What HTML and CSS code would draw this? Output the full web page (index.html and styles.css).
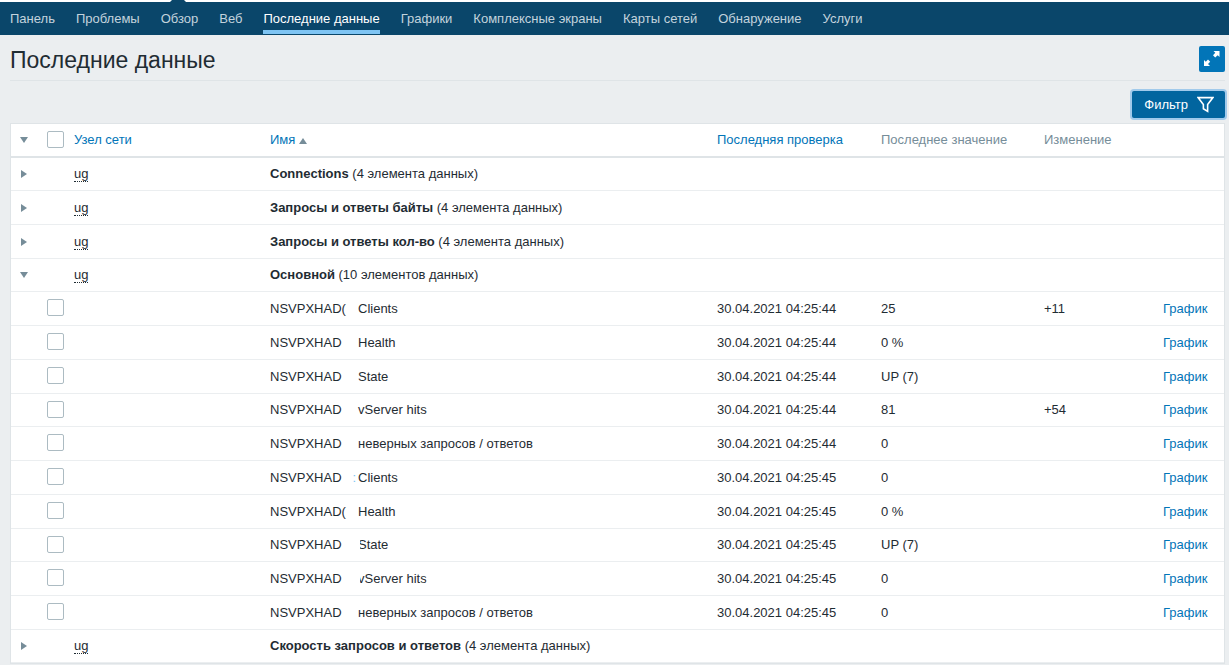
FILE: index.html
```html
<!DOCTYPE html>
<html lang="ru">
<head>
<meta charset="utf-8">
<meta name="viewport" content="width=device-width, initial-scale=1">
<title>Последние данные</title>
<link rel="stylesheet" href="styles.css">
</head>
<body>
<nav class="top-nav">
  <svg class="nav-pointer" viewBox="0 0 16 2" aria-hidden="true"><path d="M0 2L2 0H14L16 2Z"/></svg>
  <a href="#">Панель</a>
  <a href="#">Проблемы</a>
  <a href="#">Обзор</a>
  <a href="#">Веб</a>
  <a href="#" class="active" aria-current="page">Последние данные</a>
  <a href="#">Графики</a>
  <a href="#">Комплексные экраны</a>
  <a href="#">Карты сетей</a>
  <a href="#">Обнаружение</a>
  <a href="#">Услуги</a>
</nav>
<main class="page">
  <header class="page-head">
    <h1>Последние данные</h1>
    <button class="btn-kiosk" type="button" aria-label="Полный экран">
      <svg viewBox="0 0 26 26" aria-hidden="true"><path d="M14.500 5H20.500V11L18.700 9.200L16.200 11.500L14 9.300L16.300 6.800ZM5 14L6.800 15.800L9 13.500L11.200 15.700L9 18L11 20H5Z"/></svg>
    </button>
  </header>
  <div class="filter-bar">
    <button class="btn-filter" type="button">Фильтр
      <svg viewBox="0 0 16 16" aria-hidden="true"><path d="M1 1.500H15L10 8V14.500L6 12V8Z"/></svg>
    </button>
  </div>
  <table class="data">
    <colgroup>
      <col class="c-toggle"><col class="c-check"><col class="c-host"><col class="c-name">
      <col class="c-time"><col class="c-value"><col class="c-change"><col class="c-graph">
    </colgroup>
    <thead>
      <tr>
        <th><button class="toggle open" type="button" aria-label="Свернуть все"></button></th>
        <th><input type="checkbox" aria-label="Выбрать все"></th>
        <th><a href="#">Узел сети</a></th>
        <th><a href="#">Имя <span class="sort"></span></a></th>
        <th><a href="#">Последняя проверка</a></th>
        <th>Последнее значение</th>
        <th>Изменение</th>
        <th></th>
      </tr>
    </thead>
    <tbody>
      <tr><td><button class="toggle" type="button" aria-label="Развернуть"></button></td><td></td><td><a class="host" href="#">ug</a></td><td colspan="5"><b>Connections</b> (4 элемента данных)</td></tr>
      <tr><td><button class="toggle" type="button" aria-label="Развернуть"></button></td><td></td><td><a class="host" href="#">ug</a></td><td colspan="5"><b>Запросы и ответы байты</b> (4 элемента данных)</td></tr>
      <tr><td><button class="toggle" type="button" aria-label="Развернуть"></button></td><td></td><td><a class="host" href="#">ug</a></td><td colspan="5"><b>Запросы и ответы кол-во</b> (4 элемента данных)</td></tr>
      <tr><td><button class="toggle open" type="button" aria-label="Свернуть"></button></td><td></td><td><a class="host" href="#">ug</a></td><td colspan="5"><b>Основной</b> (10 элементов данных)</td></tr>
      <tr><td></td><td><input type="checkbox" aria-label="Clients"></td><td></td><td><span class="item"><span class="server">NSVPXHAD(</span><span>Clients</span></span></td><td>30.04.2021 04:25:44</td><td>25</td><td>+11</td><td><a href="#">График</a></td></tr>
      <tr><td></td><td><input type="checkbox" aria-label="Health"></td><td></td><td><span class="item"><span class="server">NSVPXHAD</span><span>Health</span></span></td><td>30.04.2021 04:25:44</td><td>0 %</td><td></td><td><a href="#">График</a></td></tr>
      <tr><td></td><td><input type="checkbox" aria-label="State"></td><td></td><td><span class="item"><span class="server">NSVPXHAD</span><span>State</span></span></td><td>30.04.2021 04:25:44</td><td>UP (7)</td><td></td><td><a href="#">График</a></td></tr>
      <tr><td></td><td><input type="checkbox" aria-label="vServer hits"></td><td></td><td><span class="item"><span class="server">NSVPXHAD</span><span>vServer hits</span></span></td><td>30.04.2021 04:25:44</td><td>81</td><td>+54</td><td><a href="#">График</a></td></tr>
      <tr><td></td><td><input type="checkbox" aria-label="неверных запросов / ответов"></td><td></td><td><span class="item"><span class="server">NSVPXHAD</span><span>неверных запросов / ответов</span></span></td><td>30.04.2021 04:25:44</td><td>0</td><td></td><td><a href="#">График</a></td></tr>
      <tr><td></td><td><input type="checkbox" aria-label="Clients"></td><td></td><td><span class="item"><span class="server">NSVPXHAD <span class="mark">:</span></span><span>Clients</span></span></td><td>30.04.2021 04:25:45</td><td>0</td><td></td><td><a href="#">График</a></td></tr>
      <tr><td></td><td><input type="checkbox" aria-label="Health"></td><td></td><td><span class="item"><span class="server">NSVPXHAD(</span><span>Health</span></span></td><td>30.04.2021 04:25:45</td><td>0 %</td><td></td><td><a href="#">График</a></td></tr>
      <tr><td></td><td><input type="checkbox" aria-label="State"></td><td></td><td><span class="item"><span class="server">NSVPXHAD</span><span class="clipped">State</span></span></td><td>30.04.2021 04:25:45</td><td>UP (7)</td><td></td><td><a href="#">График</a></td></tr>
      <tr><td></td><td><input type="checkbox" aria-label="vServer hits"></td><td></td><td><span class="item"><span class="server">NSVPXHAD</span><span class="clipped">vServer hits</span></span></td><td>30.04.2021 04:25:45</td><td>0</td><td></td><td><a href="#">График</a></td></tr>
      <tr><td></td><td><input type="checkbox" aria-label="неверных запросов / ответов"></td><td></td><td><span class="item"><span class="server">NSVPXHAD</span><span>неверных запросов / ответов</span></span></td><td>30.04.2021 04:25:45</td><td>0</td><td></td><td><a href="#">График</a></td></tr>
      <tr><td><button class="toggle" type="button" aria-label="Развернуть"></button></td><td></td><td><a class="host" href="#">ug</a></td><td colspan="5"><b>Скорость запросов и ответов</b> (4 элемента данных)</td></tr>
    </tbody>
  </table>
</main>
</body>
</html>
```
FILE: styles.css
```css
* { box-sizing: border-box; }

body {
  margin: 0;
  background: #ebeef0;
  color: #1f2c33;
  font: 13px/16px "Liberation Sans", Arial, sans-serif;
}

a { color: #0275b8; text-decoration: none; }
button { font: inherit; cursor: pointer; }

.top-nav {
  position: relative;
  display: flex;
  gap: 21px;
  height: 35px;
  padding: 0 10px;
  border-top: 2px solid #fff;
  background: #0a466a;
}
.top-nav a {
  height: 32px;
  padding-top: 9px;
  border-bottom: 4px solid transparent;
  color: #c3d3dd;
  white-space: nowrap;
}
.top-nav a.active { border-color: #7ec4f3; color: #fff; }
.nav-pointer {
  position: absolute;
  top: -2px;
  left: 170px;
  width: 16px;
  height: 2px;
  fill: #0a466a;
}

.page { padding: 0 4px 0 10px; }
.page-head {
  display: flex;
  align-items: center;
  justify-content: space-between;
  height: 46px;
  padding-top: 3px;
  border-bottom: 1px solid #dfe4e7;
}
h1 { margin: 0; padding-top: 2px; font-size: 23px; line-height: 28px; font-weight: 400; }
.btn-kiosk {
  width: 26px;
  height: 26px;
  padding: 0;
  border: 0;
  border-radius: 2px;
  background: #0275b8;
}
.btn-kiosk svg { display: block; fill: #fff; }

.filter-bar { display: flex; justify-content: flex-end; padding: 10px 0 5px; }
.btn-filter {
  display: flex;
  align-items: center;
  gap: 9px;
  height: 27px;
  padding: 0 11px 0 12px;
  border: 0;
  border-radius: 2px;
  background: #02659f;
  box-shadow: 0 0 0 2px #a1caeb;
  color: #fff;
}
.btn-filter svg { width: 17px; height: 17px; fill: none; stroke: #fff; stroke-width: 1.5; }

.data {
  width: 100%;
  table-layout: fixed;
  border-collapse: separate;
  border-spacing: 0;
  border: 1px solid #dfe4e7;
  background: #fff;
}
.c-toggle { width: 31px; }
.c-check { width: 27px; }
.c-host { width: 196px; }
.c-time { width: 164px; }
.c-value { width: 163px; }
.c-change { width: 119px; }
.c-graph { width: 66px; }

th, td {
  height: 34px;
  padding: 0 5px;
  border-bottom: 1px solid #ebeef0;
  text-align: left;
  vertical-align: middle;
  font-weight: 400;
  white-space: nowrap;
}
th { border-bottom: 2px solid #dfe4e7; color: #768d99; }
tbody tr:nth-child(4n) td,
tbody tr:first-child td,
tbody tr:last-child td { height: 33px; }

.toggle {
  display: flex;
  align-items: center;
  width: 16px;
  height: 16px;
  padding: 0 5px;
  border: 0;
  background: none;
}
.toggle::before {
  content: "";
  flex: none;
  border: solid transparent;
  border-width: 4px 0 4px 6px;
  border-left-color: #768d99;
}
.toggle.open { padding: 0 4px; }
.toggle.open::before {
  border-width: 6px 4px 0;
  border-color: #768d99 transparent transparent;
}

input[type="checkbox"] {
  display: block;
  appearance: none;
  width: 17px;
  height: 17px;
  margin: 0 0 2px;
  border: 1px solid #acbbc2;
  border-radius: 2px;
  background: #fff;
}

.sort {
  display: inline-block;
  border: solid transparent;
  border-width: 0 4px 6px;
  border-bottom-color: #768d99;
}
.host { border-bottom: 1px dotted #1f2c33; color: #1f2c33; }

.item { display: flex; }
.server { display: flex; justify-content: space-between; width: 88px; padding-right: 2px; }
.mark { color: #7ec4f3; }
.clipped { clip-path: inset(0 0 0 2px); }
```
